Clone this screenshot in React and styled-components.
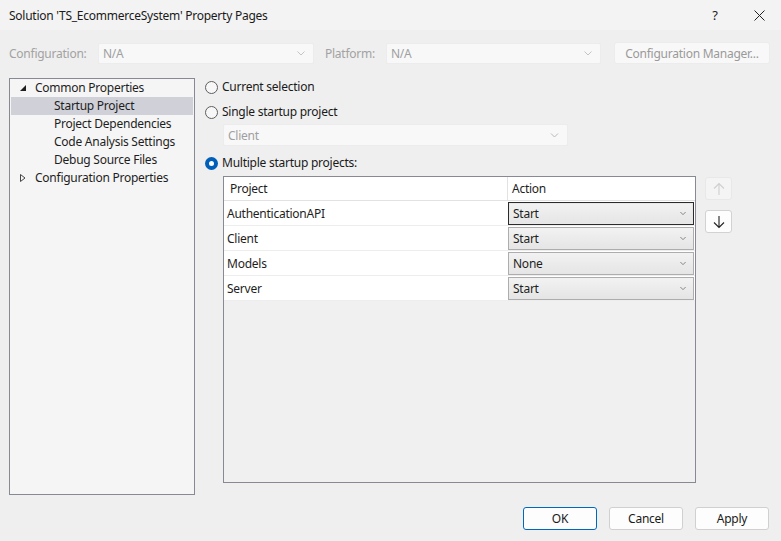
import styled, { createGlobalStyle, css } from "styled-components";

const Global = createGlobalStyle`
  html, body { margin: 0; padding: 0; background: #efefef; }
  body {
    font-family: "Noto Sans", "Liberation Sans", sans-serif;
    font-size: 12px;
    letter-spacing: -0.25px;
    color: #1a1a1a;
  }
`;

const Dialog = styled.div`
  width: 781px;
  height: 541px;
  display: flex;
  flex-direction: column;
  background: #efefef;
  overflow: hidden;
`;

const TitleBar = styled.div`
  height: 30px;
  flex: none;
  display: flex;
  align-items: center;
  padding-left: 9px;
  background: #f3f3f3;
  color: #1a1a1a;
`;
const TitleText = styled.div`
  flex: 1;
`;
const TitleButton = styled.div`
  width: 44px;
  height: 30px;
  display: flex;
  align-items: center;
  justify-content: center;
  font-size: 13px;
  color: #222;
`;

const ConfigRow = styled.div`
  margin-top: 12px;
  height: 22px;
  display: flex;
  align-items: center;
  padding-left: 9px;
`;
const FieldLabel = styled.div`
  width: ${(p) => p.$w}px;
  margin-left: ${(p) => p.$ml || 0}px;
  color: #a2a2a2;
`;
const Combo = styled.div`
  box-sizing: border-box;
  width: ${(p) => p.$w}px;
  height: 21px;
  display: flex;
  align-items: center;
  padding: 0 8px 0 4px;
  background: #f8f8f8;
  border: 1px solid #ececec;
  border-radius: 2px;
  color: #a0a0a0;
  span { flex: 1; }
`;
const CMButton = styled.div`
  box-sizing: border-box;
  margin-left: 13px;
  width: 156px;
  height: 22px;
  display: flex;
  align-items: center;
  justify-content: center;
  background: #f8f8f8;
  border: 1px solid #ececec;
  border-radius: 3px;
  color: #9a9a9a;
`;

const Main = styled.div`
  margin-top: 14px;
  height: 417px;
  display: flex;
  padding-left: 9px;
`;

const Tree = styled.div`
  box-sizing: border-box;
  width: 186px;
  height: 417px;
  border: 1px solid #878a92;
  background: #f5f5f5;
  padding: 0 1px;
`;
const TreeItem = styled.div`
  height: 18px;
  display: flex;
  align-items: center;
  padding-left: ${(p) => (p.$child ? 43 : 8)}px;
  background: ${(p) => (p.$selected ? "#cfd0d8" : "transparent")};
  color: #1e1e1e;
  line-height: 16px;
  padding-bottom: 1px;
  box-sizing: border-box;
`;
const Expander = styled.svg`
  width: 8px;
  height: 8px;
  margin-right: 8px;
`;

const Right = styled.div`
  margin-left: 10px;
  display: flex;
  flex-direction: column;
`;
const RadioRow = styled.div`
  height: 18px;
  display: flex;
  align-items: center;
  margin-top: ${(p) => p.$mt || 0}px;
  line-height: 16px;
`;
const RadioCircle = styled.div`
  box-sizing: border-box;
  width: 13px;
  height: 13px;
  border-radius: 50%;
  margin-right: 4px;
  ${(p) =>
    p.$checked
      ? css`
          background: #005fb8;
          display: flex;
          align-items: center;
          justify-content: center;
          &::after {
            content: "";
            width: 5px;
            height: 5px;
            border-radius: 50%;
            background: #fff;
          }
        `
      : css`
          border: 1px solid #5e5e5e;
          background: #f7f7f7;
        `}
`;

const ClientCombo = styled(Combo)`
  margin: 3px 0 0 18px;
  height: 22px;
`;

const TableArea = styled.div`
  display: flex;
  margin: 4px 0 0 18px;
`;
const Table = styled.div`
  box-sizing: border-box;
  width: 473px;
  height: 307px;
  border: 1px solid #878a92;
  background: #f0f0f0;
`;
const Row = styled.div`
  display: grid;
  grid-template-columns: 283px 1fr;
  height: ${(p) => (p.$head ? 24 : 25)}px;
  background: #fff;
  border-bottom: 1px solid ${(p) => (p.$head ? "#e2e2e2" : "#ededed")};
  box-sizing: border-box;
`;
const Cell = styled.div`
  display: flex;
  align-items: center;
  padding-left: ${(p) => p.$pl ?? 3}px;
  border-left: ${(p) => (p.$divide ? "1px solid #e2e2e2" : "none")};
  color: #1e1e1e;
`;
const ActionCombo = styled.div`
  box-sizing: border-box;
  width: 186px;
  height: 23px;
  display: flex;
  align-items: center;
  padding: 0 7px 0 4px;
  background: linear-gradient(#f2f2f2, #e5e5e5);
  border: 1px solid ${(p) => (p.$focus ? "#2b2b2b" : "#adadad")};
  ${(p) => p.$focus && "box-shadow: inset 0 0 0 1px #e8e8e8;"}
  span { flex: 1; }
`;

const SideButtons = styled.div`
  margin-left: 9px;
  display: flex;
  flex-direction: column;
  gap: 10px;
  padding-top: 1px;
`;
const ArrowButton = styled.div`
  box-sizing: border-box;
  width: 27px;
  height: 23px;
  border: 1px solid ${(p) => (p.$disabled ? "#e8e8e8" : "#d2d2d2")};
  border-radius: 3px;
  background: ${(p) => (p.$disabled ? "#f4f4f4" : "#fdfdfd")};
  display: flex;
  align-items: center;
  justify-content: center;
`;

const Footer = styled.div`
  display: flex;
  justify-content: flex-end;
  gap: 12px;
  padding: 12px 12px 0 0;
`;
const Button = styled.div`
  box-sizing: border-box;
  width: 74px;
  height: 23px;
  display: flex;
  align-items: center;
  justify-content: center;
  background: #fdfdfd;
  border: 1px solid ${(p) => (p.$primary ? "#0067c0" : "#d0d0d0")};
  border-radius: 3px;
  color: #1a1a1a;
`;

const Chevron = ({ color = "#a8a8a8", w = 8 }) => (
  <svg width={w} height="5" viewBox="0 0 8 5">
    <polyline points="0.5,0.5 4,4 7.5,0.5" fill="none" stroke={color} strokeWidth="1" />
  </svg>
);

const Arrow = ({ up, color }) => (
  <svg width="12" height="14" viewBox="0 0 12 14">
    {up ? (
      <path d="M6 13V1.5M1 6.5L6 1.5L11 6.5" fill="none" stroke={color} strokeWidth="1.1" />
    ) : (
      <path d="M6 1v11.5M1 7.5L6 12.5L11 7.5" fill="none" stroke={color} strokeWidth="1.1" />
    )}
  </svg>
);

const projects = [
  { name: "AuthenticationAPI", action: "Start", focus: true },
  { name: "Client", action: "Start" },
  { name: "Models", action: "None" },
  { name: "Server", action: "Start" },
];

export default function App() {
  return (
    <Dialog>
      <Global />
      <TitleBar>
        <TitleText>Solution 'TS_EcommerceSystem' Property Pages</TitleText>
        <TitleButton>?</TitleButton>
        <TitleButton>
          <svg width="11" height="11" viewBox="0 0 11 11">
            <path d="M0.5 0.5L10.5 10.5M10.5 0.5L0.5 10.5" stroke="#222" strokeWidth="1" />
          </svg>
        </TitleButton>
      </TitleBar>

      <ConfigRow>
        <FieldLabel $w={89}>Configuration:</FieldLabel>
        <Combo $w={216}>
          <span>N/A</span>
          <Chevron color="#c4c4c4" />
        </Combo>
        <FieldLabel $w={61} $ml={11}>Platform:</FieldLabel>
        <Combo $w={215}>
          <span>N/A</span>
          <Chevron color="#c4c4c4" />
        </Combo>
        <CMButton>Configuration Manager...</CMButton>
      </ConfigRow>

      <Main>
        <Tree>
          <TreeItem>
            <Expander viewBox="0 0 8 8">
              <polygon points="7,1 7,7 1,7" fill="#1e1e1e" />
            </Expander>
            Common Properties
          </TreeItem>
          <TreeItem $child $selected>Startup Project</TreeItem>
          <TreeItem $child>Project Dependencies</TreeItem>
          <TreeItem $child>Code Analysis Settings</TreeItem>
          <TreeItem $child>Debug Source Files</TreeItem>
          <TreeItem>
            <Expander viewBox="0 0 8 8">
              <polygon points="1.5,0.5 6,4 1.5,7.5" fill="none" stroke="#444" strokeWidth="1" />
            </Expander>
            Configuration Properties
          </TreeItem>
        </Tree>

        <Right>
          <RadioRow>
            <RadioCircle />
            Current selection
          </RadioRow>
          <RadioRow $mt={7}>
            <RadioCircle />
            Single startup project
          </RadioRow>
          <ClientCombo $w={345}>
            <span>Client</span>
            <Chevron color="#b8b8b8" w={9} />
          </ClientCombo>
          <RadioRow $mt={8}>
            <RadioCircle $checked />
            Multiple startup projects:
          </RadioRow>
          <TableArea>
            <Table>
              <Row $head>
                <Cell $pl={6}>Project</Cell>
                <Cell $divide $pl={4}>Action</Cell>
              </Row>
              {projects.map((p) => (
                <Row key={p.name}>
                  <Cell>{p.name}</Cell>
                  <Cell $pl={1}>
                    <ActionCombo $focus={p.focus}>
                      <span>{p.action}</span>
                      <Chevron color="#666" w={6} />
                    </ActionCombo>
                  </Cell>
                </Row>
              ))}
            </Table>
            <SideButtons>
              <ArrowButton $disabled>
                <Arrow up color="#cfcfcf" />
              </ArrowButton>
              <ArrowButton>
                <Arrow color="#222" />
              </ArrowButton>
            </SideButtons>
          </TableArea>
        </Right>
      </Main>

      <Footer>
        <Button $primary>OK</Button>
        <Button>Cancel</Button>
        <Button>Apply</Button>
      </Footer>
    </Dialog>
  );
}
